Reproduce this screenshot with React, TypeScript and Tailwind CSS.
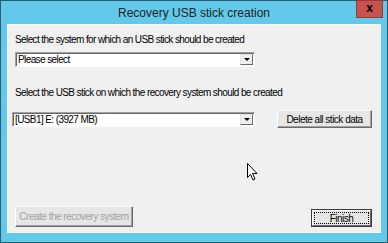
import React from "react";

const uiFont = { fontFamily: '"Liberation Sans", Arial, sans-serif' };

const Combo: React.FC<{ value: string; className?: string }> = ({ value, className }) => (
  <div
    className={`flex h-[15px] items-stretch border border-t-[#a0a0a0] border-l-[#a0a0a0] border-r-white border-b-white bg-white shadow-[inset_1px_1px_0_#696969] ${className ?? ""}`}
  >
    <div className="flex flex-1 items-center pl-[2px] text-[10px] leading-none tracking-[-0.6px] text-black">{value}</div>
    <div className="my-[1px] mr-[1px] flex w-[13px] items-center justify-center border border-t-[#e3e3e3] border-l-[#e3e3e3] border-r-[#696969] border-b-[#696969] bg-[#f0f0f0]">
      <div className="h-0 w-0 border-x-[3px] border-t-[3px] border-x-transparent border-t-black" />
    </div>
  </div>
);

const Button: React.FC<{ label: string; className?: string; disabled?: boolean }> = ({ label, className, disabled }) => (
  <div
    className={`flex items-center justify-center whitespace-nowrap border border-t-white border-l-white border-r-[#696969] border-b-[#696969] bg-[#e6e6e6] shadow-[inset_-1px_-1px_0_#a0a0a0] text-[10px] tracking-[-0.5px] ${disabled ? "text-[#a0a0a0]" : "text-black"} ${className ?? ""}`}
  >
    {label}
  </div>
);

const Cursor: React.FC = () => (
  <svg className="absolute left-[239px] top-[138px]" width="11" height="18" viewBox="0 0 11 18">
    <path d="M0.5 0.5 L0.5 14.5 L3.5 11.5 L6 17 L8 16 L5.5 10.5 L10 10.5 Z" fill="white" stroke="black" strokeWidth="1" />
  </svg>
);

export default function App() {
  return (
    <div style={uiFont} className="flex h-[243px] w-[388px] flex-col border border-[#2f5d70] bg-[#63c9ea]">
      {/* Title bar */}
      <div className="relative flex h-[23px] shrink-0 items-center justify-center">
        <span className="text-[12px] text-[#222]">Recovery USB stick creation</span>
        <div className="absolute right-[4px] top-[-1px] flex h-[18px] w-[27px] items-center justify-center border border-[#8f3c3b] bg-[#c75250] pb-[2px] text-[12px] font-bold text-black">
          x
        </div>
      </div>

      {/* Client area */}
      <div className="relative mx-[6px] mb-[9px] flex flex-1 flex-col border border-[#f8f8f8] bg-[#f0f0f0] px-[7px] pb-[5px]">
        <div className="mt-[8px] whitespace-nowrap text-[10px] leading-[13px] tracking-[-0.6px] text-black">
          Select the system for which an USB stick should be created
        </div>
        <Combo value="Please select" className="mt-[6px] w-[240px]" />

        <div className="mt-[19px] whitespace-nowrap text-[10px] leading-[13px] tracking-[-0.6px] text-black">
          Select the USB stick on which the recovery system should be created
        </div>
        <div className="mt-[11px] flex items-start">
          <Combo value="[USB1] E: (3927 MB)" className="-ml-[3px] mt-[2px] w-[243px]" />
          <Button label="Delete all stick data" className="ml-[22px] h-[18px] w-[95px]" />
        </div>

        <div className="mt-auto flex items-end justify-between">
          <Button label="Create the recovery system" disabled className="h-[21px] w-[118px]" />
          <div className="mr-[1px] border border-[#3c3c3c]">
            <div className="flex h-[16px] w-[59px] items-center justify-center border border-t-white border-l-white border-r-[#696969] border-b-[#696969] bg-[#e6e6e6] p-[1px]">
              <div className="flex h-full w-full items-center justify-center border border-dotted border-black text-[10px] tracking-[-0.5px] text-black">
                Finish
              </div>
            </div>
          </div>
        </div>
        <Cursor />
      </div>
    </div>
  );
}
